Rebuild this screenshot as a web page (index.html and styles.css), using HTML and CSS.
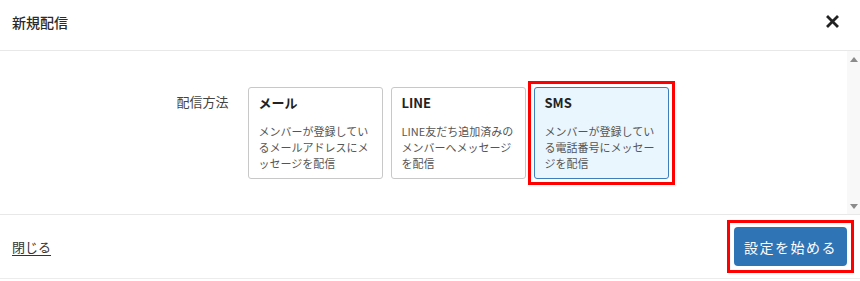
FILE: index.html
```html
<!DOCTYPE html>
<html lang="ja">
<head>
<meta charset="utf-8">
<link rel="stylesheet" href="styles.css">
</head>
<body>
<div class="modal">
  <header class="modal-header">
    <h1 class="modal-title">新規配信</h1>
    <button class="close-btn" aria-label="閉じる">
      <svg width="13" height="13" viewBox="0 0 13 13"><path d="M2 2 L11 11 M11 2 L2 11" stroke="#222" stroke-width="2.8" stroke-linecap="square"/></svg>
    </button>
  </header>
  <div class="modal-body">
    <div class="body-content">
      <div class="method-row">
        <div class="method-label">配信方法</div>
        <div class="cards">
          <div class="card">
            <div class="card-title">メール</div>
            <div class="card-desc">メンバーが登録してい<br>るメールアドレスにメ<br>ッセージを配信</div>
          </div>
          <div class="card">
            <div class="card-title">LINE</div>
            <div class="card-desc">LINE友だち追加済みの<br>メンバーへメッセージ<br>を配信</div>
          </div>
          <div class="card card-selected highlight">
            <div class="card-title">SMS</div>
            <div class="card-desc">メンバーが登録してい<br>る電話番号にメッセー<br>ジを配信</div>
          </div>
        </div>
      </div>
    </div>
    <div class="scrollbar">
      <span class="arrow-up"></span>
      <span class="arrow-down"></span>
    </div>
  </div>
  <footer class="modal-footer">
    <a class="close-link" href="#">閉じる</a>
    <button class="primary-btn highlight">設定を始める</button>
  </footer>
</div>
</body>
</html>
```
FILE: styles.css
```css
* { box-sizing: border-box; }
html, body { margin: 0; padding: 0; background: #fff; }
body {
  font-family: "Noto Sans CJK JP", "Noto Sans", sans-serif;
  color: #333;
  width: 860px;
  height: 281px;
  overflow: hidden;
}
.modal { width: 860px; }
.modal-header {
  height: 51px;
  border-bottom: 1px solid #e8e8e8;
  display: flex;
  justify-content: space-between;
  align-items: flex-start;
  padding: 12px 21px 0 12px;
}
.modal-title {
  margin: 0;
  font-size: 14px;
  font-weight: 500;
  line-height: 21px;
  color: #2a2a2a;
}
.close-btn {
  border: 0;
  background: none;
  padding: 0;
  margin-top: 3px;
  width: 13px;
  height: 13px;
  display: block;
}
.close-btn svg { display: block; }
.modal-body {
  height: 164px;
  display: flex;
  border-bottom: 1px solid #e8e8e8;
}
.body-content {
  flex: 1;
  padding-top: 36px;
  padding-right: 2px;
}
.scrollbar {
  width: 13px;
  background: #f8f8f8;
  display: flex;
  flex-direction: column;
  justify-content: space-between;
  align-items: center;
  padding: 6px 0 5px;
}
.arrow-up, .arrow-down {
  width: 0;
  height: 0;
  border-left: 4px solid transparent;
  border-right: 4px solid transparent;
}
.arrow-up { border-bottom: 5px solid #8a8a8a; }
.arrow-down { border-top: 5px solid #8a8a8a; }
.method-row {
  display: flex;
  justify-content: center;
  align-items: flex-start;
  gap: 19px;
}
.method-label {
  font-size: 13px;
  line-height: 18px;
  margin-top: 6px;
  color: #444;
}
.cards { display: flex; gap: 8px; }
.card {
  width: 135px;
  border: 1px solid #c8c8c8;
  border-radius: 3px;
  padding: 6px 8px 7px 10px;
  background: #fff;
}
.card-title {
  font-size: 13px;
  font-weight: 700;
  line-height: 18px;
  color: #222;
  margin-bottom: 11px;
}
.card-desc {
  font-size: 11px;
  line-height: 16px;
  color: #555;
}
.card-selected {
  background: #eaf6fd;
  border-color: #3d7fbd;
}
.highlight { position: relative; }
.highlight::after {
  content: "";
  position: absolute;
  left: -7px;
  top: -7px;
  right: -7px;
  bottom: -7px;
  border: 3px solid #ff0000;
  pointer-events: none;
}
.modal-footer {
  height: 64px;
  border-bottom: 1px solid #ececec;
  display: flex;
  justify-content: space-between;
  align-items: center;
  padding: 0 13px 0 12px;
}
.close-link {
  font-size: 13px;
  color: #333;
  text-decoration: underline;
  text-underline-offset: 3px;
}
.primary-btn {
  font-family: inherit;
  width: 113px;
  height: 39px;
  border: 0;
  border-radius: 4px;
  background: #2f74b5;
  color: #fff;
  font-size: 14px;
  letter-spacing: 1.5px;
  padding: 0;
}
```
